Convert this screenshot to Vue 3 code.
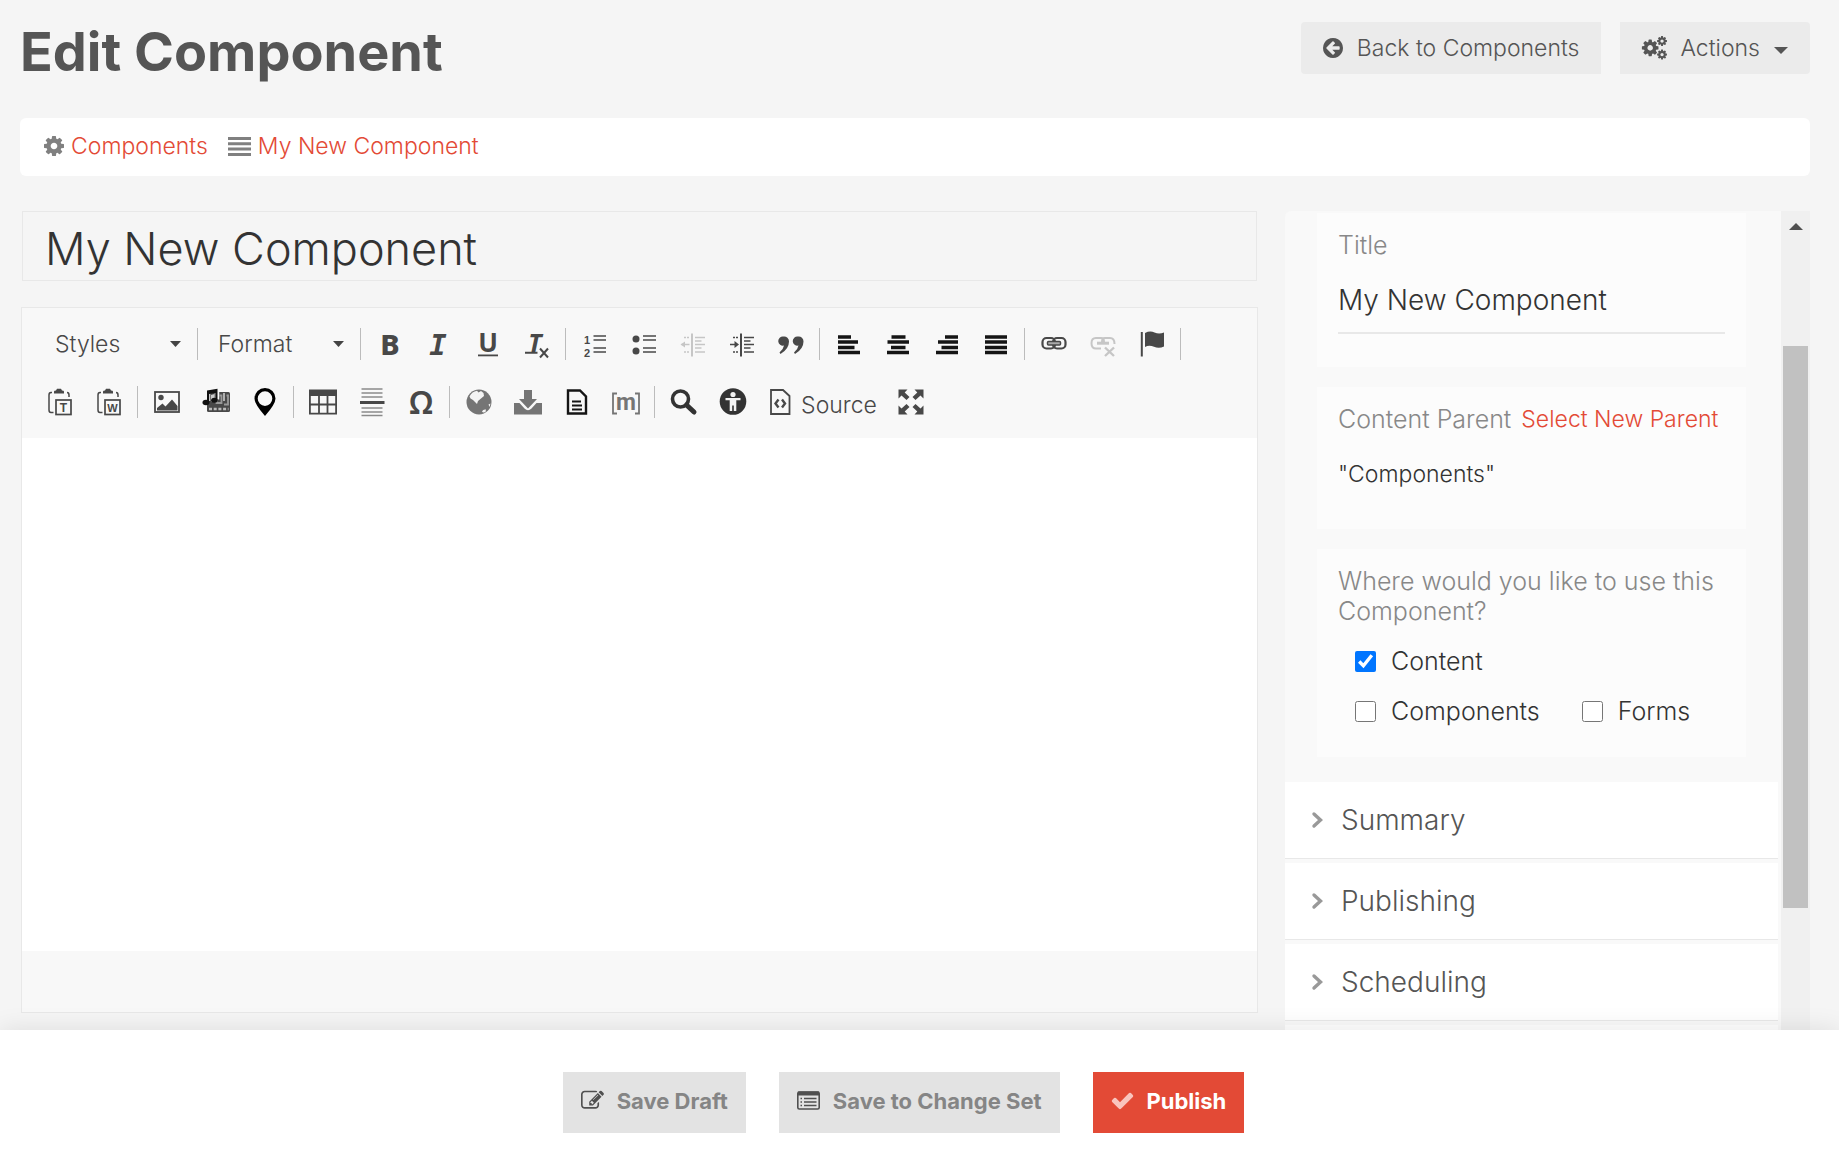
<script setup>
import { ref } from 'vue'

const title = ref('My New Component')
const usage = ref({ content: true, components: false, forms: false })
const panels = ['Summary', 'Publishing', 'Scheduling']

const cog = 'M1152 896q0-106-75-181t-181-75-181 75-75 181 75 181 181 75 181-75 75-181zm512-109v222q0 12-8 23t-20 13l-185 28q-19 54-39 91 35 50 107 138 10 12 10 25t-9 23q-27 37-99 108t-94 71q-12 0-26-9l-138-108q-44 23-91 38-16 136-29 186-7 28-36 28h-222q-14 0-24.5-8.5t-11.5-21.5l-28-184q-49-16-90-37l-141 107q-10 9-25 9-14 0-25-11-126-114-165-168-7-10-7-23 0-12 8-23 15-21 51-66.5t54-70.5q-27-50-41-99l-183-27q-13-2-21-12.5t-8-23.5v-222q0-12 8-23t19-13l186-28q14-46 39-92-40-57-107-138-10-12-10-24 0-10 9-23 26-36 98.5-107.5t94.5-71.5q13 0 26 10l138 107q44-23 91-38 16-136 29-186 7-28 36-28h222q14 0 24.5 8.5t11.5 21.5l28 184q49 16 90 37l142-107q9-9 24-9 13 0 25 10 129 119 165 170 7 8 7 22 0 12-8 23-15 21-51 66.5t-54 70.5q26 50 41 98l183 28q13 2 21 12.5t8 23.5z'

const clipboard = `
  <path d="M6 4.500H5Q3 4.500 3 7V22Q3 24.500 5 24.500H7.500M21 4.500Q23 4.500 23 7V9" fill="none" stroke="currentColor" stroke-width="1.500"/>
  <path d="M8 5.500V3.500Q8 2.500 10 2.500L11 .8H15L16 2.500Q18 2.500 18 3.500V5.500z"/>
  <rect x="10" y="12" width="15" height="14.500" fill="none" stroke="currentColor" stroke-width="1.700"/>`

const icons = {
  bold: '<text x="14" y="24.500" text-anchor="middle" font-family="Noto Sans" font-weight="800" font-size="29">B</text>',
  italic: '<text x="13" y="24.500" text-anchor="middle" font-family="DejaVu Sans Mono" font-weight="700" font-style="italic" font-size="29">I</text>',
  underline: '<text x="14" y="21.500" text-anchor="middle" font-family="Noto Sans" font-weight="700" font-size="26">U</text><rect x="4" y="24.500" width="20" height="1.800"/>',
  removeFormat: '<text x="12" y="21.500" text-anchor="middle" font-family="Noto Sans" font-weight="700" font-style="italic" font-size="25">T</text><path d="M2 22.700H14.500M17 18.500L25 27.500M25 18.500L17 27.500" fill="none" stroke="currentColor" stroke-width="2"/>',
  numbered: '<text x="3" y="13.500" font-family="Liberation Sans" font-weight="700" font-size="11">1</text><text x="3" y="26.500" font-family="Liberation Sans" font-weight="700" font-size="11">2</text><path d="M12.500 6H25M12.500 10H25M12.500 18H25M12.500 22H25" fill="none" stroke="currentColor" stroke-width="1.600"/>',
  bulleted: '<circle cx="6" cy="9" r="3.500"/><circle cx="6" cy="21" r="3.500"/><path d="M13 6H26M13 10H26M13 18H26M13 22H26" fill="none" stroke="currentColor" stroke-width="1.600"/>',
  outdent: '<path d="M13 3.500V26.500" stroke="currentColor" stroke-width="2"/><path d="M16 7.500H26M16 11H22.500M16 14.500H26M16 18H22.500M16 22H26M2.500 14.500H10.500" stroke="currentColor" stroke-width="1.600"/><path d="M1.500 14.500L6 11.500V17.500z"/><path d="M5 7.500H11M5 22H11" stroke="currentColor" stroke-width="1.600" stroke-dasharray="2 1"/>',
  indent: '<path d="M13 3.500V26.500" stroke="currentColor" stroke-width="2"/><path d="M16 7.500H26M16 11H22.500M16 14.500H26M16 18H22.500M16 22H26M2 14.500H9" stroke="currentColor" stroke-width="1.600"/><path d="M11 14.500L6.500 11V18z"/><path d="M5 7.500H11M5 22H11" stroke="currentColor" stroke-width="1.600" stroke-dasharray="2 1"/>',
  quote: '<path d="M6.500 6.500A4.800 4.800 0 0 1 12 11.500Q12 19 3.500 24L2.500 22.500Q6.500 19 7 15.500A4.600 4.600 0 1 1 6.500 6.500z"/><path d="M21 6.500A4.800 4.800 0 0 1 26.500 11.500Q26.500 19 18 24L17 22.500Q21 19 21.500 15.500A4.600 4.600 0 1 1 21 6.500z"/>',
  alignLeft: '<path d="M3 7H16M3 12H23M3 17.500H19.500M3 22.500H25" stroke="currentColor" stroke-width="3.400"/>',
  alignCenter: '<path d="M7.500 7H21.500M3.500 12H25M7 17.500H21.500M3 22.500H25" stroke="currentColor" stroke-width="3.400"/>',
  alignRight: '<path d="M12 7H25M5 12H25M8.500 17.500H25M3 22.500H25" stroke="currentColor" stroke-width="3.400"/>',
  justify: '<path d="M3 7H25M3 12H25M3 17.500H25M3 22.500H25" stroke="currentColor" stroke-width="3.400"/>',
  link: '<g fill="none" stroke="currentColor" stroke-width="2.200"><rect x="2.500" y="8" width="12.500" height="10.500" rx="4"/><rect x="13" y="8" width="12.500" height="10.500" rx="4"/></g><rect x="7.500" y="11.500" width="13" height="3.500" rx="1" fill="#aaa" stroke="currentColor" stroke-width="1.500"/>',
  unlink: '<g fill="none" stroke="currentColor" stroke-width="2"><path d="M12 18.500H7Q2.500 18.500 2.500 13.200T7 8H12Q15 8 15 12"/><path d="M13 12Q13 8 16 8H21Q25.500 8 25.500 14"/><path d="M8 13.200H20" stroke-width="3"/><path d="M16 17.500L25 26M25 17.500L16 26" stroke-width="2.400"/></g>',
  flag: '<path d="M3.800 2V26.500" stroke="currentColor" stroke-width="2"/><path d="M7 3Q12 .5 16.500 2.500T26 2.500V16.500Q21 19 16 16.800T7 17z"/>',
  pasteText: clipboard + '<text x="17.500" y="23.500" text-anchor="middle" font-family="Liberation Sans" font-weight="700" font-size="12">T</text>',
  pasteWord: clipboard + '<text x="17.500" y="23.500" text-anchor="middle" font-family="Liberation Sans" font-weight="700" font-size="11">W</text>',
  image: '<rect x="2" y="4" width="24" height="20" fill="none" stroke="currentColor" stroke-width="1.800"/><circle cx="8" cy="9.500" r="2.700"/><path d="M4 22.500V20L9.500 15.500L12.500 18.500L19 11.500L24.500 18V22.500z"/>',
  media: '<rect x="5" y="4" width="23" height="20" rx="1.500"/><path d="M7 21H26.500" stroke="#bbb" stroke-width="2.500" stroke-dasharray="3 1.700"/><path d="M17.500 7.500H19.500V15H14.500V12M22 16.500H26V7.500H24.500" stroke="#999" stroke-width="1.800" fill="none"/><path d="M22 5V13" stroke="#ddd" stroke-width="1.400"/><path d="M6 13V3L15 1.200V11.500" fill="none" stroke="#f8f8f8" stroke-width="4.500"/><path d="M9 7L12.500 6V11L9 14z" fill="#ccc"/><path d="M5 14V2.500L15.500 .8V12H13.300V5L7.200 6V14z" fill="#111"/><ellipse cx="4" cy="14.500" rx="3.500" ry="2.800" fill="#111"/><ellipse cx="12.300" cy="12.300" rx="3.200" ry="2.500" fill="#111"/>',
  pin: '<path fill-rule="evenodd" d="M14 0A10.500 10.500 0 0 1 24.500 10.500Q24.500 16 14 28Q3.500 16 3.500 10.500A10.500 10.500 0 0 1 14 0zM14 3.300A7.300 7.300 0 1 0 14 17.900A7.300 7.300 0 1 0 14 3.300z"/>',
  table: '<path d="M0 1.500H28V8H0z"/><path d="M.9 8V25.600H27.100V8M10 8V25.600M18.500 8V25.600M.9 16.500H27.100" fill="none" stroke="currentColor" stroke-width="1.800"/>',
  rule: '<path d="M3.500 1H24.500M3.500 5H24.500M3.500 9H24.500M3.500 20H24.500M3.500 24H24.500M3.500 27.500H24.500" stroke="#8a8a8a" stroke-width="1.600"/><path d="M2 14.500H26.500" stroke="currentColor" stroke-width="3"/>',
  omega: '<text x="14" y="26" text-anchor="middle" font-family="Noto Sans" font-weight="600" font-size="32">Ω</text>',
  globe: '<circle cx="14" cy="14" r="12.500"/><path d="M4.500 8.500Q7 3.500 12 2.700L13.500 4.500L16 3L18.500 5L19 8L16 10.500L13 13L12 16L10 14L8 12L5.500 10.500zM17 23.500Q18 21 21 21.500L20.500 24Q18 25 17 23.500zM23.500 16.500L25.500 15.500L24.500 19z" fill="#f3f3f3"/>',
  download: '<path d="M10 2H18V11H23L14 20.500L5 11H10z"/><path d="M0 15H5.500L10.500 20.500Q14 24 17.500 20.500L22.500 15H28V26.500H0z"/>',
  doc: '<path d="M5 2.500H17L23 8.500V25.500H5z" fill="none" stroke="currentColor" stroke-width="2.400"/><path d="M9 13.500H18M9 17.500H19M9 21.500H19" stroke="currentColor" stroke-width="2"/>',
  macro: '<path d="M5 5.500H1V25.500H5M23 5.500H27V25.500H23" fill="none" stroke="currentColor" stroke-width="1.800"/><text x="14" y="22" text-anchor="middle" font-family="Roboto" font-weight="700" font-size="23">m</text>',
  find: '<circle cx="10.500" cy="11" r="8" fill="none" stroke="currentColor" stroke-width="3.600"/><path d="M16.500 17L24 24" stroke="currentColor" stroke-width="5" stroke-linecap="round"/>',
  access: '<circle cx="14" cy="13.500" r="13.300"/><circle cx="14" cy="6.500" r="2.600" fill="#f3f3f3"/><path d="M6.500 10H21.500V12.200H17.300V23H14.800V17.500H13.200V23H10.700V12.200H6.500z" fill="#f3f3f3"/>',
  source: '<path d="M5 2H17L23.500 8V26H5z" fill="none" stroke="currentColor" stroke-width="1.800"/><path d="M12.500 11.500L9.500 15.500L12.500 19.500M16 11.500L19 15.500L16 19.500" fill="none" stroke="currentColor" stroke-width="2.400"/>',
  maximize: '<path d="M1.500 1.500H10.500L7.700 4.500L12.500 9L9.500 12L4.500 7.500L1.500 10.500zM26.500 1.500V10.500L23.500 7.500L18.500 12L15.500 9L20.300 4.500L17.500 1.500zM1.500 26.500V17.500L4.500 20.500L9.500 16L12.500 19L7.700 23.500L10.500 26.500zM26.500 26.500H17.500L20.300 23.500L15.500 19L18.500 16L23.500 20.500L26.500 17.500z"/>'
}

const combos = [
  { name: 'Styles', options: ['Styles'] },
  { name: 'Format', options: ['Format'] }
]

const rowOne = [
  [['bold', 'Bold'], ['italic', 'Italic'], ['underline', 'Underline'], ['removeFormat', 'Remove Format']],
  [['numbered', 'Numbered List'], ['bulleted', 'Bulleted List'], ['outdent', 'Decrease Indent', 'off'], ['indent', 'Increase Indent'], ['quote', 'Block Quote']],
  [['alignLeft', 'Align Left', 'dark'], ['alignCenter', 'Center', 'dark'], ['alignRight', 'Align Right', 'dark'], ['justify', 'Justify', 'dark']],
  [['link', 'Link'], ['unlink', 'Unlink', 'off'], ['flag', 'Anchor']]
]

const rowTwo = [
  [['pasteText', 'Paste as plain text'], ['pasteWord', 'Paste from Word']],
  [['image', 'Image'], ['media', 'Media'], ['pin', 'Map', 'black']],
  [['table', 'Table'], ['rule', 'Horizontal Line'], ['omega', 'Special Character']],
  [['globe', 'Web Content', 'soft'], ['download', 'Download', 'soft'], ['doc', 'Document', 'dark'], ['macro', 'Macro', 'soft']]
]
</script>

<template>
  <div class="page">
    <header class="head">
      <h1>Edit Component</h1>
      <nav class="head-actions">
        <button type="button" class="top-btn first">
          <svg class="arrow-icon" viewBox="128 128 1536 1536"><path d="M1408 960v-128q0-26-19-45t-45-19h-502l189-189q19-19 19-45t-19-45l-91-91q-18-18-45-18t-45 18l-362 362-91 91q-18 18-18 45t18 45l91 91 362 362q18 18 45 18t45-18l91-91q18-18 18-45t-18-45l-189-189h502q26 0 45-19t19-45zm256-64q0 209-103 385.500t-279.500 279.500-385.500 103-385.500-103-279.500-279.500-103-385.500 103-385.500 279.500-279.500 385.500-103 385.500 103 279.500 279.500 103 385.500z" /></svg>
          <span>Back to Components</span>
        </button>
        <button type="button" class="top-btn last">
          <svg class="cogs-icon" viewBox="0 0 25 24">
            <path :d="cog" transform="translate(-1.500 2.200) scale(.0108)" />
            <path :d="cog" transform="translate(14.300 -.7) scale(.0064)" />
            <path :d="cog" transform="translate(14.300 12.800) scale(.0064)" />
          </svg>
          <span>Actions</span>
          <svg class="caret" viewBox="0 0 14 7"><path d="M0 0H14L7 7z" /></svg>
        </button>
      </nav>
    </header>

    <nav class="crumbs">
      <a href="#components">
        <svg class="crumb-cog" viewBox="128 128 1536 1536"><path :d="cog" /></svg>
        <span>Components</span>
      </a>
      <a href="#current">
        <svg class="crumb-lines" viewBox="0 0 23 19"><path d="M0 1.500H23M0 6.800H23M0 12.100H23M0 17.400H23" stroke="currentColor" stroke-width="3" /></svg>
        <span>My New Component</span>
      </a>
    </nav>

    <main class="body">
      <section class="editing">
        <input v-model="title" class="name" type="text" aria-label="Component name">
        <div class="editor">
          <div class="toolbar">
            <div class="row one">
              <template v-for="c in combos" :key="c.name">
                <label class="combo">
                  <select :aria-label="c.name"><option v-for="o in c.options" :key="o">{{ o }}</option></select>
                  <svg viewBox="0 0 11 6"><path d="M0 0H11L5.500 6z" /></svg>
                </label>
                <i class="sep"></i>
              </template>
              <template v-for="(group, g) in rowOne" :key="g">
                <button v-for="b in group" :key="b[0]" type="button" class="tool" :class="b[2]" :title="b[1]" :aria-label="b[1]">
                  <svg viewBox="0 0 28 28" v-html="icons[b[0]]"></svg>
                </button>
                <i class="sep"></i>
              </template>
            </div>
            <div class="row">
              <template v-for="(group, g) in rowTwo" :key="g">
                <button v-for="b in group" :key="b[0]" type="button" class="tool" :class="b[2]" :title="b[1]" :aria-label="b[1]">
                  <svg viewBox="0 0 28 28" v-html="icons[b[0]]"></svg>
                </button>
                <i class="sep"></i>
              </template>
              <button type="button" class="tool dim" aria-label="Find"><svg viewBox="0 0 28 28" v-html="icons.find"></svg></button>
              <button type="button" class="tool dim" aria-label="Accessibility"><svg viewBox="0 0 28 28" v-html="icons.access"></svg></button>
              <button type="button" class="tool source"><svg viewBox="0 0 28 28" v-html="icons.source"></svg><span>Source</span></button>
              <button type="button" class="tool" aria-label="Maximize"><svg viewBox="0 0 28 28" v-html="icons.maximize"></svg></button>
            </div>
          </div>
          <div class="canvas" contenteditable="true" role="textbox" aria-label="Content"></div>
          <div class="status"></div>
        </div>
      </section>

      <aside class="side">
        <div class="side-scroll">
          <div class="cards">
            <div class="card title-card">
              <label for="side-title" class="caption">Title</label>
              <input id="side-title" v-model="title" type="text">
            </div>
            <div class="card parent-card">
              <div class="parent-line"><span class="caption">Content Parent</span><a href="#parent">Select New Parent</a></div>
              <p>"Components"</p>
            </div>
            <fieldset class="card use-card">
              <legend class="caption">Where would you like to use this Component?</legend>
              <div class="checks">
                <label class="wide"><input v-model="usage.content" type="checkbox">Content</label>
                <label><input v-model="usage.components" type="checkbox">Components</label>
                <label><input v-model="usage.forms" type="checkbox">Forms</label>
              </div>
            </fieldset>
          </div>
          <button v-for="p in panels" :key="p" type="button" class="panel">
            <svg viewBox="0 0 11 16"><path d="M2 2L8.500 8L2 14" fill="none" stroke="currentColor" stroke-width="3.400" stroke-linecap="round" /></svg>
            <span>{{ p }}</span>
          </button>
          <div class="panel"></div>
        </div>
        <div class="scrollbar">
          <svg viewBox="0 0 14 7"><path d="M7 0L14 7H0z" /></svg>
          <div class="thumb"></div>
        </div>
      </aside>
    </main>

    <footer class="foot">
      <button type="button" class="save">
        <svg viewBox="0 0 1792 1792"><path d="M888 1184l116-116-152-152-116 116v56h96v96h56zm440-720q-16-16-33 1l-350 350q-17 17-1 33t33-1l350-350q17-17 1-33zm80 594v190q0 119-84.500 203.500t-203.500 84.500h-832q-119 0-203.500-84.500t-84.500-203.500v-832q0-119 84.500-203.500t203.500-84.500h832q63 0 117 25 15 7 18 23 3 17-9 29l-49 49q-14 14-32 8-23-6-45-6h-832q-66 0-113 47t-47 113v832q0 66 47 113t113 47h832q66 0 113-47t47-113v-126q0-13 9-22l64-64q15-15 35-7t20 29zm-96-738l288 288-672 672h-288v-288zm444 132l-92 92-288-288 92-92q28-28 68-28t68 28l152 152q28 28 28 68t-28 68z" /></svg>
        <span>Save Draft</span>
      </button>
      <button type="button" class="save">
        <svg viewBox="0 0 23 23"><rect x=".8" y="3" width="21.400" height="17" rx="1.500" fill="none" stroke="currentColor" stroke-width="1.600" /><path d="M1 2.500H22V6.500H1z" /><path d="M3.500 9.500H5M3.500 13H5M3.500 16.500H5M7 9.500H19.500M7 13H19.500M7 16.500H19.500" stroke="currentColor" stroke-width="1.600" /></svg>
        <span>Save to Change Set</span>
      </button>
      <button type="button" class="save publish">
        <svg viewBox="64 64 1664 1664"><path d="M1671 566q0 40-28 68l-724 724-136 136q-28 28-68 28t-68-28l-136-136-362-362q-28-28-28-68t28-68l136-136q28-28 68-28t68 28l294 295 656-657q28-28 68-28t68 28l136 136q28 28 28 68z" /></svg>
        <span>Publish</span>
      </button>
    </footer>
  </div>
</template>

<style>
body {
  background: #f5f5f5;
}
</style>

<style scoped>
.page {
  display: flex;
  flex-direction: column;
  height: 100vh;
  overflow: hidden;
  box-sizing: border-box;
  background: #f5f5f5;
  color: #333;
  font-family: Inter, sans-serif;
  font-weight: 300;
  font-size: 23px;
}
.page *,
.page *::before {
  box-sizing: border-box;
}
button,
input,
select {
  font: inherit;
  color: inherit;
  border: 0;
  border-radius: 0;
  background: none;
  padding: 0;
  margin: 0;
}
svg {
  display: block;
  flex: none;
  fill: currentColor;
  overflow: visible;
}
a {
  color: #e34a36;
  text-decoration: none;
}
.head {
  display: flex;
  justify-content: space-between;
  align-items: flex-start;
  padding: 22px 29px 0 20px;
  height: 118px;
  flex: none;
}
h1 {
  margin: 0;
  font-size: 54px;
  line-height: 60px;
  font-weight: 700;
  color: #555;
}
.head-actions {
  display: flex;
  gap: 19px;
}
.top-btn {
  display: flex;
  align-items: center;
  height: 52px;
  padding: 0 22px;
  background: #ebebeb;
  color: #555;
}
.top-btn.first {
  border-radius: 4px 0 0 4px;
}
.top-btn.last {
  border-radius: 0 4px 4px 0;
}
.arrow-icon {
  width: 20px;
  margin-right: 14px;
}
.cogs-icon {
  width: 25px;
  margin-right: 13px;
}
.caret {
  width: 14px;
  margin: 4px 0 0 14px;
}
.crumbs {
  display: flex;
  flex: none;
  gap: 20px;
  align-items: center;
  height: 58px;
  margin: 0 29px 0 20px;
  padding: 0 24px 2px;
  background: #fff;
  border-radius: 6px;
}
.crumbs a {
  display: flex;
  align-items: center;
  gap: 7px;
}
.crumbs svg {
  color: #808080;
}
.crumb-cog {
  width: 20px;
}
.crumb-lines {
  width: 23px;
}
.body {
  display: flex;
  flex: 1;
  min-height: 0;
  gap: 27px;
  margin: 35px 29px 0 21px;
}
.editing {
  display: flex;
  flex: 1;
  flex-direction: column;
  min-width: 0;
  gap: 26px;
  padding-bottom: 17px;
}
.name {
  height: 70px;
  margin: 0 1px;
  padding: 4px 22px 0;
  border: 1px solid #e8e8e8;
  font-size: 45px;
}
.editor {
  display: flex;
  flex: 1;
  flex-direction: column;
  border: 1px solid #e8e8e8;
  background: #f8f8f8;
}
.toolbar {
  padding: 8px 13px;
}
.row {
  display: flex;
  align-items: center;
  height: 57px;
}
.row.one {
  padding: 0 0 2px 4px;
}
.combo {
  display: flex;
  align-items: center;
  width: 154px;
  padding: 0 12px 0 16px;
  color: #444;
}
.combo select {
  flex: 1;
  min-width: 0;
  appearance: none;
  color: #484848;
}
.sep {
  flex: none;
  width: 1px;
  height: 32px;
  margin: 0 4px;
  background: #bcbcbc;
}
.combo svg {
  width: 11px;
}
.tool {
  display: flex;
  flex: none;
  align-items: center;
  justify-content: center;
  width: 49px;
  height: 49px;
  color: #484848;
}
.tool svg {
  width: 28px;
  height: 28px;
}
.tool.off {
  color: #c6c6c6;
}
.tool.soft {
  color: #757575;
}
.tool.dim {
  color: #333;
}
.tool.dark {
  color: #151515;
}
.tool.black {
  color: #000;
}
.tool.source {
  width: 129px;
  gap: 7px;
}
.source span {
  padding-top: 6px;
}
.canvas {
  flex: 1;
  background: #fff;
  outline: 0;
}
.status {
  height: 61px;
}
.side {
  display: flex;
  flex: none;
  width: 525px;
  background: #f9f9f9;
  border-radius: 6px 0 0 0;
}
.side-scroll {
  flex: 1;
  min-width: 0;
  padding-right: 3px;
  overflow: hidden;
}
.cards {
  display: flex;
  flex-direction: column;
  gap: 20px;
  padding: 2px 32px 25px;
}
.card {
  margin: 0;
  padding: 17px 21px;
  border: 0;
  background: #fcfcfc;
}
.caption {
  font-size: 25px;
  line-height: 30px;
  color: #888;
}
.title-card {
  height: 154px;
}
.title-card .caption {
  display: block;
}
.title-card input {
  width: 100%;
  height: 56px;
  margin-top: 18px;
  padding-bottom: 10px;
  border-bottom: 2px solid #e8e8e8;
  font-size: 28px;
}
.parent-card {
  height: 142px;
  padding-right: 0;
}
.parent-line {
  display: flex;
  align-items: center;
  gap: 10px;
  white-space: nowrap;
}
.parent-card p {
  margin: 25px 0 0;
  line-height: 30px;
}
.use-card {
  min-width: 0;
  height: 208px;
}
.use-card legend {
  float: left;
  width: 100%;
  padding: 0;
}
.checks {
  display: flex;
  flex-wrap: wrap;
  clear: both;
  gap: 20px 42px;
  padding: 20px 0 0 17px;
}
.checks label {
  display: flex;
  align-items: center;
  gap: 15px;
  font-size: 25px;
  line-height: 30px;
}
.checks .wide {
  width: 100%;
}
.checks input {
  width: 21px;
  height: 21px;
}
.panel {
  display: flex;
  align-items: center;
  gap: 18px;
  width: 100%;
  height: 77px;
  margin-bottom: 4px;
  padding-left: 27px;
  border-bottom: 1px solid #e8e8e8;
  background: #fff;
  color: #555;
  font-size: 28px;
}
.panel svg {
  width: 11px;
  color: #999;
}
.scrollbar {
  display: flex;
  flex: none;
  flex-direction: column;
  width: 29px;
  padding: 12px 2px 122px;
  background: #f0f0f0;
}
.scrollbar svg {
  width: 14px;
  margin: 0 auto 116px;
  color: #505050;
}
.thumb {
  flex: 1;
  background: #c1c1c1;
}
.foot {
  position: relative;
  z-index: 1;
  display: flex;
  flex: none;
  gap: 33px;
  align-items: center;
  justify-content: center;
  height: 132px;
  padding: 13px 32px 0 0;
  background: #fff;
  box-shadow: 0 0 24px rgba(0, 0, 0, 0.1);
}
.save {
  display: flex;
  align-items: center;
  gap: 13px;
  height: 61px;
  padding: 0 18px 4px;
  background: #e3e3e3;
  color: #858585;
  font-size: 22px;
  font-weight: 700;
}
.save svg {
  width: 23px;
  color: #505050;
}
.publish {
  background: #e34a36;
  color: #fff;
}
.publish svg {
  color: #f9c4bd;
}
</style>
